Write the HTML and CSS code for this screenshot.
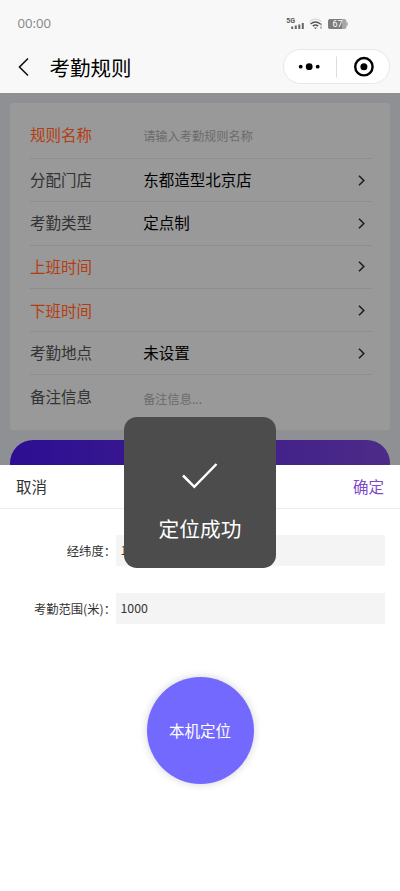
FILE: index.html
```html
<!DOCTYPE html>
<html lang="zh-CN">
<head>
<meta charset="utf-8">
<meta name="viewport" content="width=device-width, initial-scale=1">
<title>考勤规则</title>
<link rel="stylesheet" href="styles.css">
</head>
<body>
<div class="screen">
  <header class="header">
    <div class="status">
      <span class="time">00:00</span>
      <svg class="status-icons" width="64" height="16" viewBox="0 0 64 16">
        <text x="0.3" y="6.8" class="net">5G</text>
        <g fill="#666"><rect x="5.2" y="10.500" width="2" height="2.500"/><rect x="8.800" y="9.500" width="2" height="3.500"/><rect x="12.300" y="8.500" width="2" height="4.500"/><rect x="15.800" y="7" width="2" height="6"/></g>
        <g fill="none" stroke-width="1.500"><path d="M23.500 5.500q6-4.500 12 0" stroke="#ddd"/><path d="M24.500 8q5-4 10 0" stroke="#555"/><path d="M26.800 10.200q2.700-2.200 5.400 0" stroke="#555"/></g>
        <path d="M28 11.500h3L29.500 13.200z" fill="#555"/>
        <path d="M35 7.500v2M35 10.800v1.800" stroke="#777" stroke-width="1.200"/>
        <rect x="42" y="3" width="18.500" height="10" rx="2.500" fill="#a5a5a5"/><path d="M44.500 3H56v10H44.500Q42 13 42 10.500v-5Q42 3 44.500 3z" fill="#7c7c7c"/><path d="M60.500 6q1.500 0 1.500 2t-1.500 2z" fill="#a5a5a5"/>
        <text x="51.500" y="11.200" text-anchor="middle" class="battery">67</text>
      </svg>
    </div>
    <div class="nav">
      <svg class="back" width="12" height="20" viewBox="0 0 12 20"><path d="M10 1.500L1.500 10l8.500 8.500" fill="none" stroke="#111" stroke-width="1.600"/></svg>
      <h1>考勤规则</h1>
      <div class="capsule">
        <svg width="108" height="36" viewBox="0 0 108 36"><circle cx="17.700" cy="17.700" r="1.900"/><circle cx="26.200" cy="17.700" r="3.400"/><circle cx="34.700" cy="17.700" r="1.900"/><path d="M53.500 7.500v21" stroke="#ddd"/><circle cx="80.900" cy="17.700" r="8.700" fill="none" stroke="#000" stroke-width="2.400"/><circle cx="80.900" cy="17.700" r="3.500"/></svg>
      </div>
    </div>
  </header>
  <main class="page">
    <section class="card">
      <div class="row first"><span class="label required">规则名称</span><span class="placeholder">请输入考勤规则名称</span></div>
      <div class="row"><span class="label">分配门店</span><span class="value">东都造型北京店</span><svg class="arrow" viewBox="0 0 7 11"><path d="M1 .7l4.800 4.800L1 10.300"/></svg></div>
      <div class="row"><span class="label">考勤类型</span><span class="value">定点制</span><svg class="arrow" viewBox="0 0 7 11"><path d="M1 .7l4.800 4.800L1 10.300"/></svg></div>
      <div class="row"><span class="label required">上班时间</span><span class="value"></span><svg class="arrow" viewBox="0 0 7 11"><path d="M1 .7l4.800 4.800L1 10.300"/></svg></div>
      <div class="row"><span class="label required">下班时间</span><span class="value"></span><svg class="arrow" viewBox="0 0 7 11"><path d="M1 .7l4.800 4.800L1 10.300"/></svg></div>
      <div class="row"><span class="label">考勤地点</span><span class="value">未设置</span><svg class="arrow" viewBox="0 0 7 11"><path d="M1 .7l4.800 4.800L1 10.300"/></svg></div>
      <div class="row last"><span class="label">备注信息</span><span class="placeholder">备注信息...</span></div>
    </section>
    <div class="submit"></div>
    <div class="mask"></div>
  </main>
  <section class="sheet">
    <div class="sheet-head"><span>取消</span><span class="confirm">确定</span></div>
    <div class="field"><label>经纬度：</label><div class="input">116</div></div>
    <div class="field"><label>考勤范围(米)：</label><div class="input">1000</div></div>
    <button class="locate">本机定位</button>
  </section>
  <div class="toast">
    <svg width="38" height="28" viewBox="0 0 38 28"><path d="M2 13.500L13.300 24.800 35.500 2" fill="none" stroke="#fff" stroke-width="2.500"/></svg>
    <span>定位成功</span>
  </div>
</div>
</body>
</html>
```
FILE: styles.css
```css
* { box-sizing: border-box; }

body {
  margin: 0;
  font-family: "Noto Sans CJK SC", sans-serif;
  color: #333;
}

.screen {
  position: relative;
  display: flex;
  flex-direction: column;
  width: 400px;
  height: 891px;
  overflow: hidden;
  background: #fff;
}

.header {
  flex: 0 0 93.4px;
  background: #f8f8f8;
}

.status {
  display: flex;
  justify-content: space-between;
  align-items: center;
  height: 44px;
  padding: 3px 50px 0 17.5px;
}

.time {
  padding-bottom: 2px;
  font: 13.2px "Open Sans", sans-serif;
  color: #858585;
}

.net { font: bold 7px Roboto, sans-serif; fill: #555; }
.battery { font: 9px Roboto, sans-serif; fill: #fff; }

.nav {
  display: flex;
  align-items: center;
  height: 45px;
  padding: 0 10px 0 18px;
}

h1 {
  flex: 1;
  margin: 0 0 0 19.5px;
  font-size: 20.5px;
  line-height: 30px;
  font-weight: 400;
  color: #000;
}

.capsule {
  display: flex;
  align-items: center;
  justify-content: center;
  width: 107px;
  height: 35px;
  border: 1px solid #e8e8e8;
  border-radius: 18px;
  background: #fff;
}

.capsule svg { flex: none; }

.page {
  position: relative;
  flex: 0 0 371.6px;
  padding: 10px 10px 0;
  overflow: hidden;
  background: #eef0f6;
}

.card {
  height: 327px;
  padding: 0 18px 0 20px;
  border-radius: 3px;
  background: #fff;
}

.row {
  display: flex;
  align-items: center;
  height: 43.3px;
  border-bottom: 1px solid #ececec;
  font-size: 15.5px;
  line-height: 22px;
}

.row.first { height: 55.6px; padding-top: 7px; }
.row.last { border-bottom: 0; }

.label { width: 113.2px; padding-bottom: 2px; color: #555; }
.label.required {
  position: relative;
  z-index: 1;
  padding-bottom: 1px;
  color: #b53c10;
}
.value { flex: 1; padding-bottom: 2px; color: #000; }
.placeholder { padding-top: 3px; font-size: 12.2px; color: #b4b4b4; }

.arrow {
  width: 7px;
  height: 11px;
  margin-right: 7.2px;
  fill: none;
  stroke: #333;
  stroke-width: 1.6;
}

.submit {
  height: 46px;
  margin-top: 10px;
  border-radius: 23px;
  background: linear-gradient(90deg, #4b18f5, #8048e2);
}

.mask {
  position: absolute;
  inset: 0;
  background: rgba(0, 0, 0, .4);
}

.sheet { flex: 1; background: #fff; }

.sheet-head {
  display: flex;
  justify-content: space-between;
  align-items: center;
  height: 44px;
  padding: 0 16px 1px;
  border-bottom: 1.5px solid #ebebeb;
  font-size: 15.5px;
}

.confirm { color: #7e4cc8; }

.field {
  display: flex;
  align-items: center;
  height: 31px;
  margin: 26.5px 15.5px 0 0;
  font-size: 12.3px;
}

.field label { width: 116px; padding-top: 1px; text-align: right; white-space: nowrap; }

.input {
  flex: 1;
  height: 31px;
  padding-left: 4.5px;
  line-height: 31px;
  background: #f4f4f4;
}

.locate {
  display: block;
  width: 107px;
  height: 107px;
  margin: 53px auto 0;
  padding: 0;
  border: 0;
  border-radius: 50%;
  font: 15.5px "Noto Sans CJK SC", sans-serif;
  color: #fff;
  background: #7469ff;
  box-shadow: 0 0 8px rgba(0, 0, 0, .18);
}

.toast {
  position: absolute;
  z-index: 2;
  top: 417px;
  left: 124px;
  display: flex;
  flex-direction: column;
  align-items: center;
  width: 152px;
  height: 151px;
  padding-top: 45px;
  border-radius: 13px;
  font-size: 20.7px;
  line-height: 30px;
  color: #fff;
  background: #4c4c4c;
}

.toast span { margin-top: 23px; }
```
